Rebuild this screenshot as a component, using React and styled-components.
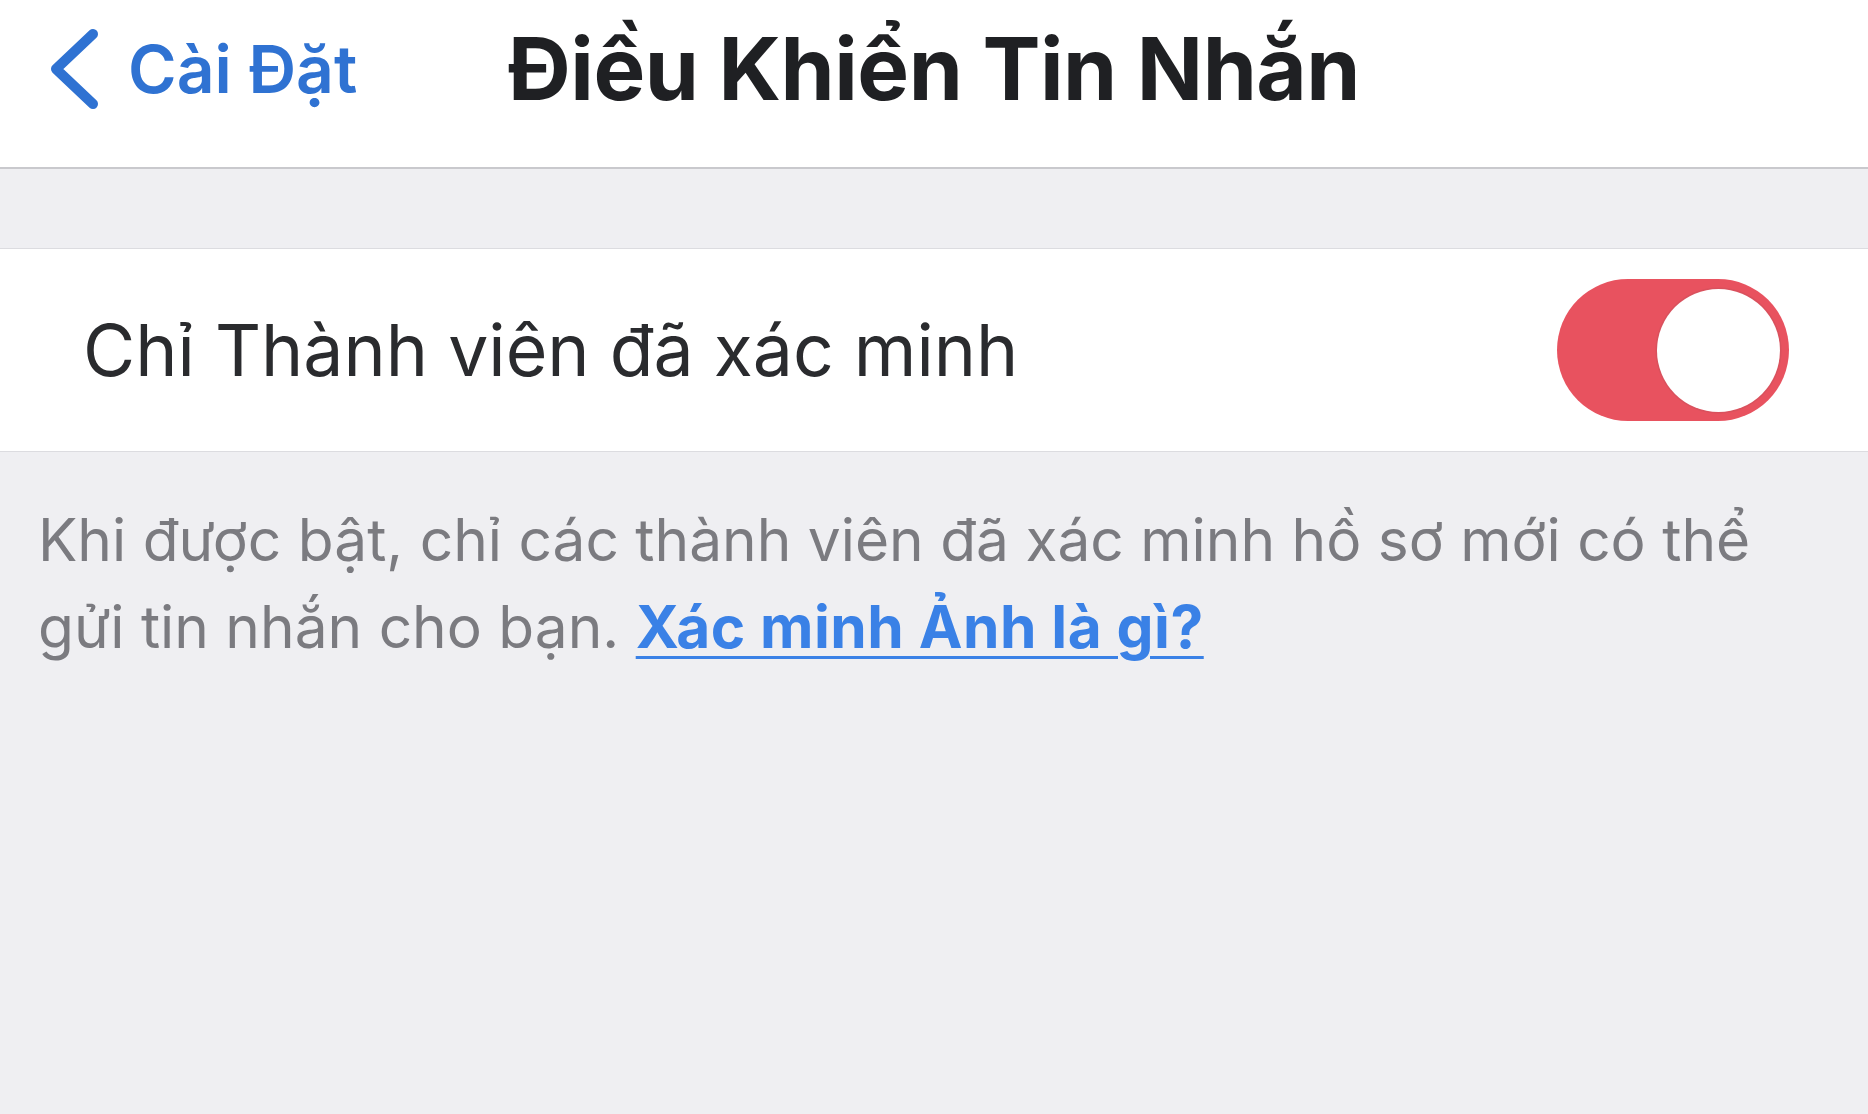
import React from "react";
import styled, { createGlobalStyle } from "styled-components";

const Global = createGlobalStyle`
  html, body { margin: 0; padding: 0; }
  body { background: #efeff2; font-family: "Inter", "Noto Sans", sans-serif; }
  #root { min-height: 1114px; }
`;

const Page = styled.div`
  width: 1868px;
  height: 1114px;
  background: #efeff2;
  overflow: hidden;
`;

const NavBar = styled.header`
  height: 169px;
  background: #ffffff;
  border-bottom: 2px solid #c9c9cd;
  display: grid;
  grid-template-columns: 1fr auto 1fr;
  align-items: center;
  box-sizing: border-box;
  padding-bottom: 30px;
`;

const BackButton = styled.button`
  justify-self: start;
  display: flex;
  align-items: center;
  gap: 28px;
  background: none;
  border: 0;
  padding: 0 0 0 50px;
  color: #2f72d2;
  font-family: inherit;
  font-size: 66px;
  font-weight: 600;
  cursor: pointer;
`;

const Title = styled.h1`
  margin: 0;
  font-size: 87px;
  font-weight: 700;
  color: #1f2023;
  letter-spacing: -0.5px;
`;

const Spacer = styled.div`
  height: 79px;
`;

const Row = styled.div`
  height: 204px;
  box-sizing: border-box;
  background: #ffffff;
  border-top: 1px solid #dcdce0;
  border-bottom: 1px solid #dcdce0;
  display: flex;
  align-items: center;
  justify-content: space-between;
  padding: 0 79px 0 83px;
`;

const RowLabel = styled.span`
  font-size: 71.5px;
  font-weight: 400;
  color: #2a2b2e;
`;

const Switch = styled.div`
  width: 232px;
  height: 142px;
  border-radius: 71px;
  background: ${(p) => (p.$on ? "#e8525f" : "#e5e5ea")};
  display: flex;
  align-items: center;
  justify-content: ${(p) => (p.$on ? "flex-end" : "flex-start")};
  padding: 0 9px;
  box-sizing: border-box;
`;

const Knob = styled.div`
  width: 123px;
  height: 123px;
  border-radius: 50%;
  background: #ffffff;
  box-shadow: 0 0 0 1.5px #d9515d;
`;

const Footnote = styled.p`
  margin: 0;
  padding: 44px 80px 0 38px;
  font-size: 58.6px;
  line-height: 87px;
  color: #7b7b80;
`;

const Link = styled.a`
  color: #3a81e6;
  font-weight: 700;
  letter-spacing: 0.5px;
  text-decoration: underline;
  text-decoration-thickness: 3px;
  text-underline-offset: 8px;
`;

function Chevron() {
  return (
    <svg width="50" height="80" viewBox="0 0 50 80">
      <polyline
        points="43,5 6,40 43,75"
        fill="none"
        stroke="#2f72d2"
        strokeWidth="10"
        strokeLinecap="round"
        strokeLinejoin="round"
      />
    </svg>
  );
}

export default function App() {
  return (
    <Page>
      <Global />
      <NavBar>
        <BackButton>
          <Chevron />
          Cài Đặt
        </BackButton>
        <Title>Điều Khiển Tin Nhắn</Title>
        <div />
      </NavBar>
      <Spacer />
      <Row>
        <RowLabel>Chỉ Thành viên đã xác minh</RowLabel>
        <Switch $on>
          <Knob />
        </Switch>
      </Row>
      <Footnote>
        Khi được bật, chỉ các thành viên đã xác minh hồ sơ mới có thể gửi tin
        nhắn cho bạn. <Link href="#">Xác minh Ảnh là gì?</Link>
      </Footnote>
    </Page>
  );
}
